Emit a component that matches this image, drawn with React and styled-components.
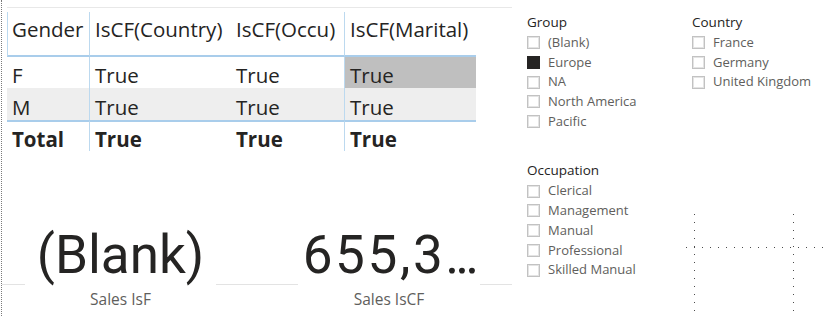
import React from "react";
import styled, { createGlobalStyle, css } from "styled-components";

const Global = createGlobalStyle`
  html, body { margin: 0; padding: 0; background: #ffffff; }
  body { width: 823px; height: 316px; overflow: hidden; }
  #root { width: 823px; height: 316px; }
`;

const Page = styled.div`
  display: flex;
  width: 823px;
  height: 316px;
  background: #fff;
  font-family: "Open Sans", "Noto Sans", sans-serif;
  color: #252423;
`;

const LeftPane = styled.div`
  box-sizing: border-box;
  width: 511px;
  margin-left: 1px;
  height: 316px;
  border-left: 1px dotted #7a7a7a;
  display: flex;
  flex-direction: column;
`;

const TableVisual = styled.div`
  box-sizing: border-box;
  width: 505px;
  margin: 7px 0 0 5px;
  border-top: 1px solid #e8e8e8;
  padding-top: 4px;
`;

const Grid = styled.div`
  display: grid;
  grid-template-columns: 82px 142px 113px 132px;
  width: 469px;
  font-size: 20.5px;
  line-height: 24px;
`;

const rowStyles = {
  head: css`
    height: 45px;
    padding-top: 5px;
    border-bottom: 2px solid #a9cdeb;
  `,
  f: css`
    height: 31px;
    padding-top: 6px;
  `,
  m: css`
    height: 32px;
    padding-top: 7px;
    background: #eeeeee;
  `,
  total: css`
    height: 31px;
    padding-top: 5px;
    border-top: 2px solid #a9cdeb;
    font-weight: 700;
  `,
};

const Cell = styled.div`
  box-sizing: border-box;
  padding-left: 5px;
  white-space: nowrap;
  ${(p) => rowStyles[p.$row]}
  ${(p) => p.$line && css`border-left: 1px solid #bcd9ef;`}
  ${(p) => p.$edge && css`border-left: 1px solid #bcd9ef; padding-left: 4px;`}
  ${(p) => p.$hi && css`background: #bfbfbf;`}
`;

const CardsRow = styled.div`
  flex: 1;
  display: flex;
  gap: 82px;
  padding-left: 23px;
  background-image: linear-gradient(#e3e3e3, #e3e3e3);
  background-size: 100% 1px;
  background-position: 0 133px;
  background-repeat: no-repeat;
`;

const Card = styled.div`
  width: ${(p) => p.$w}px;
  background: #fff;
  padding-top: 73px;
  display: flex;
  flex-direction: column;
  align-items: center;
`;

const BigValue = styled.div`
  font-family: Roboto, "Liberation Sans", sans-serif;
  font-size: 53px;
  line-height: 62px;
  height: 62px;
  color: #252423;
  white-space: nowrap;
  letter-spacing: ${(p) => p.$spacing || 0}px;
`;

const Dots = styled.span`
  letter-spacing: -4px;
`;

const CardLabel = styled.div`
  margin-top: 2px;
  font-size: 15.5px;
  color: #605e5c;
  white-space: nowrap;
`;

const RightPane = styled.div`
  flex: 1;
  box-sizing: border-box;
  padding: 12.5px 0 0 15px;
  display: grid;
  grid-template-columns: 165px 1fr;
  grid-template-rows: auto auto;
  row-gap: 29.5px;
  align-items: start;
`;

const Slicer = styled.div`
  display: flex;
  flex-direction: column;
`;

const SlicerTitle = styled.div`
  font-size: 13.5px;
  line-height: 19.7px;
  height: 20.5px;
  color: #252423;
  white-space: nowrap;
`;

const Item = styled.div`
  display: flex;
  align-items: center;
  height: 19.7px;
  font-size: 13px;
  line-height: 19.7px;
  color: #605e5c;
  white-space: nowrap;
`;

const Box = styled.span`
  box-sizing: border-box;
  width: 13px;
  height: 13px;
  margin-right: 8px;
  flex: none;
  border: 1px solid ${(p) => (p.$on ? "#252423" : "#c2c2c2")};
  background: ${(p) => (p.$on ? "#252423" : "#fff")};
  box-shadow: ${(p) => (p.$on ? "none" : "inset 0 0 0 1px #e4e4e4")};
`;

const Guides = styled.div`
  width: 137px;
  height: 104px;
  margin: 53px 0 0 -6px;
  background-image:
    repeating-linear-gradient(to bottom, #4a4a4a 0 1px, transparent 1px 8px),
    repeating-linear-gradient(to bottom, #4a4a4a 0 1px, transparent 1px 8px),
    repeating-linear-gradient(to right, #4a4a4a 0 1px, transparent 1px 8px);
  background-size: 1px 100%, 1px 100%, 100% 1px;
  background-position: 8px 0, 107px 0, 0 33.5px;
  background-repeat: no-repeat;
`;

const rows = [
  { key: "head", cells: ["Gender", "IsCF(Country)", "IsCF(Occu)", "IsCF(Marital)"] },
  { key: "f", cells: ["F", "True", "True", "True"], hi: 3 },
  { key: "m", cells: ["M", "True", "True", "True"] },
  { key: "total", cells: ["Total", "True", "True", "True"] },
];

function SlicerBlock({ title, items, checked }) {
  return (
    <Slicer>
      <SlicerTitle>{title}</SlicerTitle>
      {items.map((it) => (
        <Item key={it}>
          <Box $on={it === checked} />
          {it}
        </Item>
      ))}
    </Slicer>
  );
}

export default function App() {
  return (
    <>
      <Global />
      <Page>
        <LeftPane>
          <TableVisual>
            <Grid>
              {rows.map((r) =>
                r.cells.map((c, i) => (
                  <Cell
                    key={r.key + i}
                    $row={r.key}
                    $line={i === 1 || i === 3}
                    $edge={r.key === "head" && i === 0}
                    $hi={r.hi === i}
                  >
                    {c}
                  </Cell>
                ))
              )}
            </Grid>
          </TableVisual>
          <CardsRow>
            <Card $w={191}>
              <BigValue>(Blank)</BigValue>
              <CardLabel>Sales IsF</CardLabel>
            </Card>
            <Card $w={182}>
              <BigValue $spacing={2.6}>
                655,3<Dots>...</Dots>
              </BigValue>
              <CardLabel>Sales IsCF</CardLabel>
            </Card>
          </CardsRow>
        </LeftPane>
        <RightPane>
          <SlicerBlock
            title="Group"
            items={["(Blank)", "Europe", "NA", "North America", "Pacific"]}
            checked="Europe"
          />
          <SlicerBlock title="Country" items={["France", "Germany", "United Kingdom"]} />
          <SlicerBlock
            title="Occupation"
            items={["Clerical", "Management", "Manual", "Professional", "Skilled Manual"]}
          />
          <Guides />
        </RightPane>
      </Page>
    </>
  );
}
